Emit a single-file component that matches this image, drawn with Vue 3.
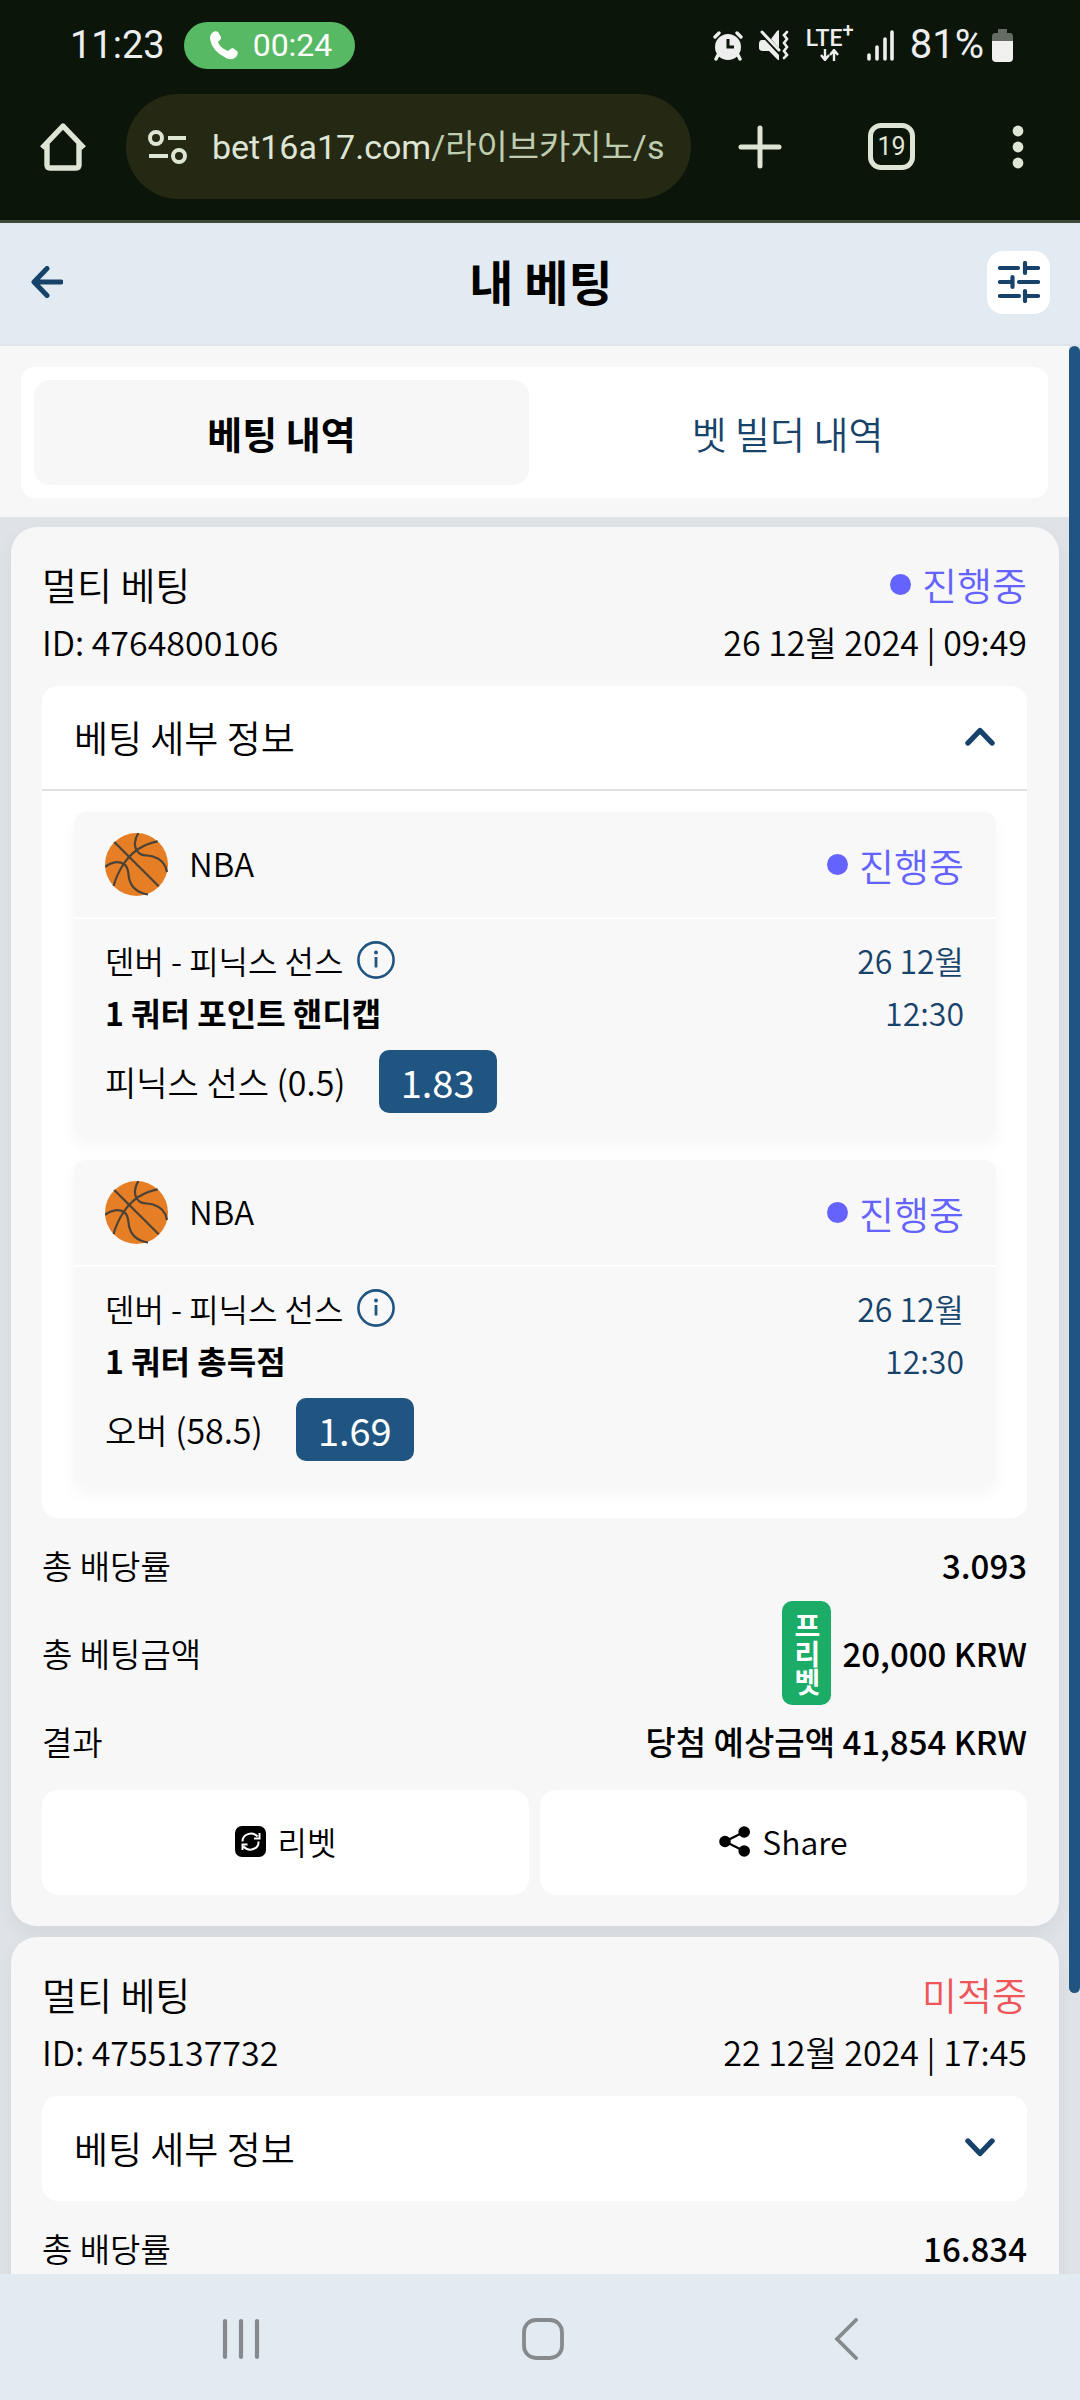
<script setup>
import { ref } from 'vue'

const activeTab = ref('history')
const tabs = [
  { id: 'history', label: '베팅 내역' },
  { id: 'builder', label: '벳 빌더 내역' },
]

const bets = ref([
  {
    id: '4764800106',
    title: '멀티 베팅',
    status: '진행중',
    live: true,
    date: '26 12월 2024 | 09:49',
    open: true,
    actions: true,
    picks: [
      { league: 'NBA', status: '진행중', teams: '덴버 - 피닉스 선스', market: '1 쿼터 포인트 핸디캡', choice: '피닉스 선스 (0.5)', odds: '1.83', day: '26 12월', time: '12:30' },
      { league: 'NBA', status: '진행중', teams: '덴버 - 피닉스 선스', market: '1 쿼터 총득점', choice: '오버 (58.5)', odds: '1.69', day: '26 12월', time: '12:30' },
    ],
    rows: [
      { label: '총 배당률', value: '3.093' },
      { label: '총 베팅금액', value: '20,000 KRW', badge: '프리벳' },
      { label: '결과', value: '당첨 예상금액 41,854 KRW' },
    ],
  },
  {
    id: '4755137732',
    title: '멀티 베팅',
    status: '미적중',
    live: false,
    date: '22 12월 2024 | 17:45',
    open: false,
    actions: false,
    picks: [],
    rows: [{ label: '총 배당률', value: '16.834' }],
  },
])
</script>

<template>
  <div class="screen">
    <header class="browser">
      <div class="status">
        <span class="clock">11:23</span>
        <span class="call">
          <svg width="28" height="29" viewBox="0 0 28 29" aria-hidden="true">
            <path d="M2 2Q5-1 8 1L11 6Q12 8 8 11Q10 17 18 20Q21 17 23 17L27 20Q29 22 26 26Q22 30 16 27Q2 20 0 8Q0 4 2 2Z" fill="#fff" />
          </svg>
          00:24
        </span>
        <span class="spacer"></span>
        <span class="status-icons">
          <svg width="30" height="31" viewBox="0 0 30 31" aria-hidden="true">
            <path d="M2 7L6 3M28 7L24 3M5 25L3 29M25 25L27 29" stroke="#eee" stroke-width="3.4" stroke-linecap="round" />
            <circle cx="15" cy="17" r="13" fill="#eee" />
            <path d="M15 9V17H21" fill="none" stroke="#0b1509" stroke-width="3" />
          </svg>
          <svg width="30" height="31" viewBox="0 0 30 31" aria-hidden="true">
            <path d="M0 14Q0 10 3 10H6L20 25V30H19L10 21H4Q0 21 0 18ZM20 0V18L12 9L18 1Z" fill="#eee" />
            <path d="M3 2L20 20" stroke="#eee" stroke-width="3" stroke-linecap="round" />
            <path d="M28 2L25 5L28 9L25 13L28 17L25 21L28 25L25 28" fill="none" stroke="#eee" stroke-width="2.6" stroke-linecap="round" />
          </svg>
          <span class="lte">
            <span>LTE<sup>+</sup></span>
            <svg width="20" height="12" viewBox="0 0 20 12" aria-hidden="true">
              <path d="M5 0V10M1 6L5 11L9 6M14 12V2M10 6L14 1L18 6" fill="none" stroke="#eee" stroke-width="2.4" />
            </svg>
          </span>
          <svg width="30" height="31" viewBox="0 0 30 31" aria-hidden="true">
            <path d="M4 25V29M12 17V29M20 9V29M27 2V29" stroke="#eee" stroke-width="3.6" stroke-linecap="round" />
          </svg>
        </span>
        <span class="percent">81%</span>
        <svg width="21" height="33" viewBox="0 0 21 33" aria-hidden="true">
          <path d="M6 0H15V4H18Q21 4 21 8V12H0V8Q0 4 3 4H6Z" fill="#656c63" />
          <path d="M0 12H21V29Q21 33 17 33H4Q0 33 0 29Z" fill="#f0f0ef" />
        </svg>
      </div>
      <div class="toolbar">
        <button class="icon-button" aria-label="홈">
          <svg width="48" height="48" viewBox="0 0 48 48" aria-hidden="true">
            <path d="M3 25L24 3L45 25M8 21V42Q8 45 11 45H37Q40 45 40 42V21" fill="none" stroke="#dfe5d5" stroke-width="5.4" stroke-linejoin="round" />
          </svg>
        </button>
        <button class="address">
          <svg width="40" height="34" viewBox="0 0 40 34" aria-hidden="true">
            <g fill="none" stroke="#dfe5d5" stroke-width="4">
              <circle cx="8" cy="8" r="6" />
              <circle cx="31" cy="26" r="6" />
              <path d="M20 8H38M1 26H20" />
            </g>
          </svg>
          <span class="url">bet16a17.com<span class="path">/라이브카지노/s</span></span>
        </button>
        <button class="icon-button" aria-label="새 탭">
          <svg width="44" height="44" viewBox="0 0 44 44" aria-hidden="true">
            <path d="M22 3V41M3 22H41" stroke="#dfe5d5" stroke-width="5" stroke-linecap="round" />
          </svg>
        </button>
        <button class="tab-count">19</button>
        <button class="icon-button" aria-label="메뉴">
          <svg width="12" height="44" viewBox="0 0 12 44" aria-hidden="true">
            <g fill="#dfe5d5">
              <circle cx="6" cy="6" r="5.4" />
              <circle cx="6" cy="22" r="5.4" />
              <circle cx="6" cy="38" r="5.4" />
            </g>
          </svg>
        </button>
      </div>
    </header>

    <div class="page-head">
      <button class="back" aria-label="뒤로">
        <svg width="32" height="32" viewBox="0 0 32 32" aria-hidden="true">
          <path d="M16 2.500L3 16L16 29.500M4 16H30" fill="none" stroke="#17436b" stroke-width="5" stroke-linecap="round" stroke-linejoin="round" />
        </svg>
      </button>
      <h1>내 베팅</h1>
      <button class="filter" aria-label="필터">
        <svg width="42" height="42" viewBox="0 0 42 42" aria-hidden="true">
          <path d="M2 7H20M2 21H14M14.500 16V26M21 21H40M2 35H21M27 2V12M28 7H40M27 30V40M28 35H40" fill="none" stroke="#17436b" stroke-width="4.200" stroke-linecap="round" />
        </svg>
      </button>
    </div>

    <div class="body">
      <main class="scroll">
        <div class="tabs-wrap">
          <div class="tabs" role="tablist">
            <button
              v-for="tab in tabs"
              :key="tab.id"
              role="tab"
              class="tab"
              :class="{ active: tab.id === activeTab }"
              :aria-selected="tab.id === activeTab"
              @click="activeTab = tab.id"
            >{{ tab.label }}</button>
          </div>
        </div>

        <div class="list">
          <article v-for="bet in bets" :key="bet.id" class="card">
            <div class="line title-line">
              <span>{{ bet.title }}</span>
              <span class="state" :class="{ live: bet.live }">{{ bet.status }}</span>
            </div>
            <div class="line id-line">
              <span>ID: {{ bet.id }}</span>
              <span>{{ bet.date }}</span>
            </div>

            <section class="details">
              <button class="toggle" :aria-expanded="bet.open" @click="bet.open = !bet.open">
                <span>베팅 세부 정보</span>
                <svg width="30" height="19" viewBox="0 0 30 19" aria-hidden="true">
                  <path :d="bet.open ? 'M3 16L15 3.500L27 16' : 'M3 3L15 15.500L27 3'" fill="none" stroke="#17436b" stroke-width="5.400" stroke-linecap="round" stroke-linejoin="round" />
                </svg>
              </button>
              <div v-if="bet.open" class="picks">
                <div v-for="pick in bet.picks" :key="pick.market" class="pick">
                  <div class="pick-head">
                    <svg width="63" height="63" viewBox="0 0 63 63" aria-hidden="true">
                      <circle cx="31.500" cy="31.500" r="31.500" fill="#e67e25" />
                      <g fill="none" stroke="#4b4238" stroke-width="2.200">
                        <path d="M9.300 9L53.700 53.300" />
                        <path d="M52.700 8.300C38 11 26 20 18.900 30.500C14 38 10.500 46 8.600 53" />
                        <path d="M33.400 0C29 7 29 14 32 18C36 24 42 21.500 48 23.500C56 26 61 32 62 39" />
                        <path d="M0 34C6 28.500 14 28 19 31C24 34.500 23 40 24 45C26 54 33 60 43 61.500" />
                      </g>
                    </svg>
                    <span class="league">{{ pick.league }}</span>
                    <span class="state live">{{ pick.status }}</span>
                  </div>
                  <div class="pick-body">
                    <div class="pick-main">
                      <div class="teams">
                        {{ pick.teams }}
                        <svg width="38" height="38" viewBox="0 0 38 38" aria-hidden="true">
                          <circle cx="19" cy="19" r="17.600" fill="none" stroke="#205581" stroke-width="2.600" />
                          <path d="M19 16V26.500" stroke="#205581" stroke-width="2.800" />
                          <circle cx="19" cy="11.500" r="1.900" fill="#205581" />
                        </svg>
                      </div>
                      <div class="market">{{ pick.market }}</div>
                      <div class="choice">
                        <span>{{ pick.choice }}</span>
                        <span class="odds">{{ pick.odds }}</span>
                      </div>
                    </div>
                    <div class="when">
                      <span>{{ pick.day }}</span>
                      <span>{{ pick.time }}</span>
                    </div>
                  </div>
                </div>
              </div>
            </section>

            <dl class="rows">
              <div v-for="row in bet.rows" :key="row.label" class="line row">
                <dt>{{ row.label }}</dt>
                <dd>
                  <span v-if="row.badge" class="freebet">{{ row.badge }}</span>
                  {{ row.value }}
                </dd>
              </div>
            </dl>

            <div v-if="bet.actions" class="actions">
              <button class="action">
                <svg width="31" height="31" viewBox="0 0 31 31" aria-hidden="true">
                  <rect width="31" height="31" rx="7" fill="#000" />
                  <path d="M7.500 15.500C7.500 8 17 5 22.500 10.500M24.500 7V12.500H19M23.500 15.500C24 23 14 26.500 8.500 20.500M7.500 24V18.500H12.500" fill="none" stroke="#fff" stroke-width="2" />
                </svg>
                리벳
              </button>
              <button class="action">
                <svg width="31" height="31" viewBox="0 0 31 31" aria-hidden="true">
                  <path d="M25 6L6 15.500L25 25" fill="none" stroke="#000" stroke-width="2.200" />
                  <circle cx="25.200" cy="6" r="5.800" />
                  <circle cx="6" cy="15.500" r="5.800" />
                  <circle cx="25.200" cy="25" r="5.800" />
                </svg>
                Share
              </button>
            </div>
          </article>
        </div>
      </main>
      <div class="track"><div class="thumb"></div></div>
    </div>

    <nav class="system-nav">
      <button aria-label="최근 앱">
        <svg width="40" height="42" viewBox="0 0 40 42" aria-hidden="true">
          <path d="M4 3V39M20 3V39M36 3V39" stroke="#868a8d" stroke-width="4.200" stroke-linecap="round" />
        </svg>
      </button>
      <button aria-label="홈 화면">
        <svg width="42" height="42" viewBox="0 0 42 42" aria-hidden="true">
          <rect x="2" y="2" width="38" height="38" rx="12" fill="none" stroke="#868a8d" stroke-width="3.800" />
        </svg>
      </button>
      <button aria-label="이전">
        <svg width="24" height="42" viewBox="0 0 24 42" aria-hidden="true">
          <path d="M22 2L3 21L22 40" fill="none" stroke="#868a8d" stroke-width="3.800" stroke-linecap="round" />
        </svg>
      </button>
    </nav>
  </div>
</template>

<style>
body {
  margin: 0;
}
</style>

<style scoped>
.screen {
  display: flex;
  flex-direction: column;
  height: 100vh;
  overflow: hidden;
  background: #e2eaf2;
  color: #000;
  font-family: "Noto Sans CJK KR", "Noto Sans", sans-serif;
  font-size: 33px;
  font-weight: 350;
  line-height: 48px;
}
button {
  margin: 0;
  padding: 0;
  border: 0;
  background: none;
  color: inherit;
  font: inherit;
}
svg {
  display: block;
  flex: none;
}

.browser {
  flex: none;
  background: #0b1509;
  border-bottom: 3px solid #3f493b;
  font-family: Roboto, "Noto Sans CJK KR", sans-serif;
  font-weight: 400;
}
.status {
  display: flex;
  align-items: center;
  height: 90px;
  padding: 0 67px 0 70px;
  color: #eee;
  font-size: 38px;
}
.call {
  display: flex;
  align-items: center;
  gap: 15px;
  height: 47px;
  margin-left: 19px;
  padding: 0 23px 0 26px;
  border-radius: 24px;
  background: #57b964;
  color: #fff;
  font-size: 32px;
}
.spacer {
  flex: 1;
}
.status-icons {
  display: flex;
  align-items: center;
  gap: 16px;
}
.lte {
  display: flex;
  flex-direction: column;
  align-items: center;
  width: 50px;
  margin-right: -6px;
  font-size: 23px;
  font-weight: 500;
  line-height: 20px;
}
.lte sup {
  font-size: 20px;
  line-height: 0;
}
.percent {
  margin: 0 8px 0 15px;
  font-size: 40px;
}
.toolbar {
  display: flex;
  align-items: center;
  height: 113px;
  padding: 0 56px 17px 39px;
}
.address {
  flex: 1;
  display: flex;
  align-items: center;
  gap: 24px;
  min-width: 0;
  height: 105px;
  margin: 0 47px 0 39px;
  padding: 0 16px 0 22px;
  border-radius: 53px;
  background: #252914;
  color: #dfe5d5;
  font-size: 34px;
  overflow: hidden;
  white-space: nowrap;
}
.path {
  color: #bfccb0;
}
.tab-count {
  width: 47px;
  height: 47px;
  margin: 0 97px 0 86px;
  border: 5px solid #dfe5d5;
  border-radius: 13px;
  color: #dfe5d5;
  font-size: 25px;
  line-height: 36px;
}

.page-head {
  flex: none;
  display: grid;
  grid-template-columns: 64px 1fr 64px;
  align-items: center;
  height: 118px;
  padding: 0 29px 3px 31px;
  border-bottom: 2px solid #dfe5ea;
}
.page-head h1 {
  margin: 0;
  padding-bottom: 5px;
  text-align: center;
  font-size: 48px;
  font-weight: 700;
  line-height: 64px;
}
.filter {
  display: grid;
  place-items: center;
  width: 63px;
  height: 63px;
  border-radius: 16px;
  background: #fff;
}

.body {
  flex: 1;
  display: flex;
  min-height: 0;
  background: #dfe2e7;
}
.scroll {
  flex: 1;
  min-width: 0;
  overflow-y: auto;
  scrollbar-width: none;
}
.track {
  width: 11px;
}
.thumb {
  height: 85.4%;
  border-radius: 6px;
  background: #205581;
}
.tabs-wrap {
  padding: 21px 21px 19px;
  background: #f7f7f7;
}
.tabs {
  display: flex;
  gap: 11px;
  padding: 13px;
  border-radius: 14px;
  background: #fff;
}
.tab {
  flex: 1;
  height: 105px;
  border-radius: 16px;
  color: #17436b;
  font-size: 38px;
}
.tab.active {
  background: #f7f7f7;
  color: #000;
  font-weight: 700;
}

.list {
  display: flex;
  flex-direction: column;
  gap: 11px;
  padding: 10px 10px 0 11px;
}
.card {
  padding: 29px 32px 31px 31px;
  border-radius: 26px;
  background: #f7f7f8;
  box-shadow: 0 8px 20px rgba(0, 0, 0, 0.05);
}
.line {
  display: flex;
  align-items: center;
  justify-content: space-between;
}
.title-line {
  font-size: 38px;
  line-height: 56px;
}
.id-line {
  margin-bottom: 14px;
  font-size: 34px;
  line-height: 60px;
}
.state {
  display: flex;
  align-items: center;
  gap: 11px;
  color: #ef5659;
  font-size: 38px;
}
.state.live {
  color: #6563ff;
}
.state.live::before {
  content: "";
  width: 21px;
  height: 21px;
  border-radius: 50%;
  background: #6563ff;
}

.details {
  border-radius: 16px;
  background: #fff;
}
.toggle {
  display: flex;
  align-items: center;
  justify-content: space-between;
  width: 100%;
  height: 105px;
  padding: 0 32px 2px;
  font-size: 37px;
}
.picks {
  display: flex;
  flex-direction: column;
  gap: 22px;
  padding: 21px 31px 32px 32px;
  border-top: 2px solid #dfe2e5;
}
.toggle:has(+ .picks) {
  height: 103px;
}
.pick {
  border-radius: 12px;
  background: #f8f8f8;
  box-shadow: 0 8px 18px rgba(0, 0, 0, 0.04);
}
.pick-head {
  display: flex;
  align-items: center;
  gap: 21px;
  height: 105px;
  padding: 0 32px 0 31px;
  border-bottom: 2px solid #fff;
}
.league {
  padding-bottom: 3px;
}
.pick-head .state {
  margin-left: auto;
}
.pick-body {
  display: flex;
  justify-content: space-between;
  padding: 15px 32px 25px 31px;
  font-size: 32px;
  line-height: 52px;
}
.teams {
  display: flex;
  align-items: center;
  gap: 14px;
}
.market {
  font-weight: 700;
}
.choice {
  display: flex;
  align-items: center;
  gap: 33px;
  margin-top: 12px;
  font-size: 34px;
}
.odds {
  min-width: 74px;
  padding: 0 22px;
  border-radius: 10px;
  background: #205581;
  color: #fff;
  font-size: 38px;
  font-weight: 400;
  line-height: 63px;
  text-align: center;
}
.when {
  display: flex;
  flex-direction: column;
  align-items: flex-end;
  color: #17436b;
}

.rows {
  display: flex;
  flex-direction: column;
  gap: 11px;
  margin: 22px 0 0;
}
.row {
  line-height: 50px;
}
.row dd {
  display: flex;
  align-items: center;
  gap: 11px;
  margin: 0;
  font-weight: 500;
}
.freebet {
  width: 25px;
  padding: 10px 12px;
  border-radius: 10px;
  background: #1bad67;
  color: #fff;
  font-size: 28px;
  font-weight: 700;
  line-height: 28px;
  text-align: center;
  word-break: break-all;
}
.actions {
  display: flex;
  gap: 11px;
  margin-top: 24px;
}
.action {
  flex: 1;
  display: flex;
  align-items: center;
  justify-content: center;
  gap: 12px;
  height: 105px;
  padding-bottom: 3px;
  border-radius: 16px;
  background: #fff;
  font-size: 32px;
}

.system-nav {
  flex: none;
  display: flex;
  height: 126px;
  padding: 0 83px 0 90px;
  background: #e2eaf2;
}
.system-nav button {
  flex: 1;
  display: grid;
  place-items: center;
  padding-top: 4px;
}
</style>
